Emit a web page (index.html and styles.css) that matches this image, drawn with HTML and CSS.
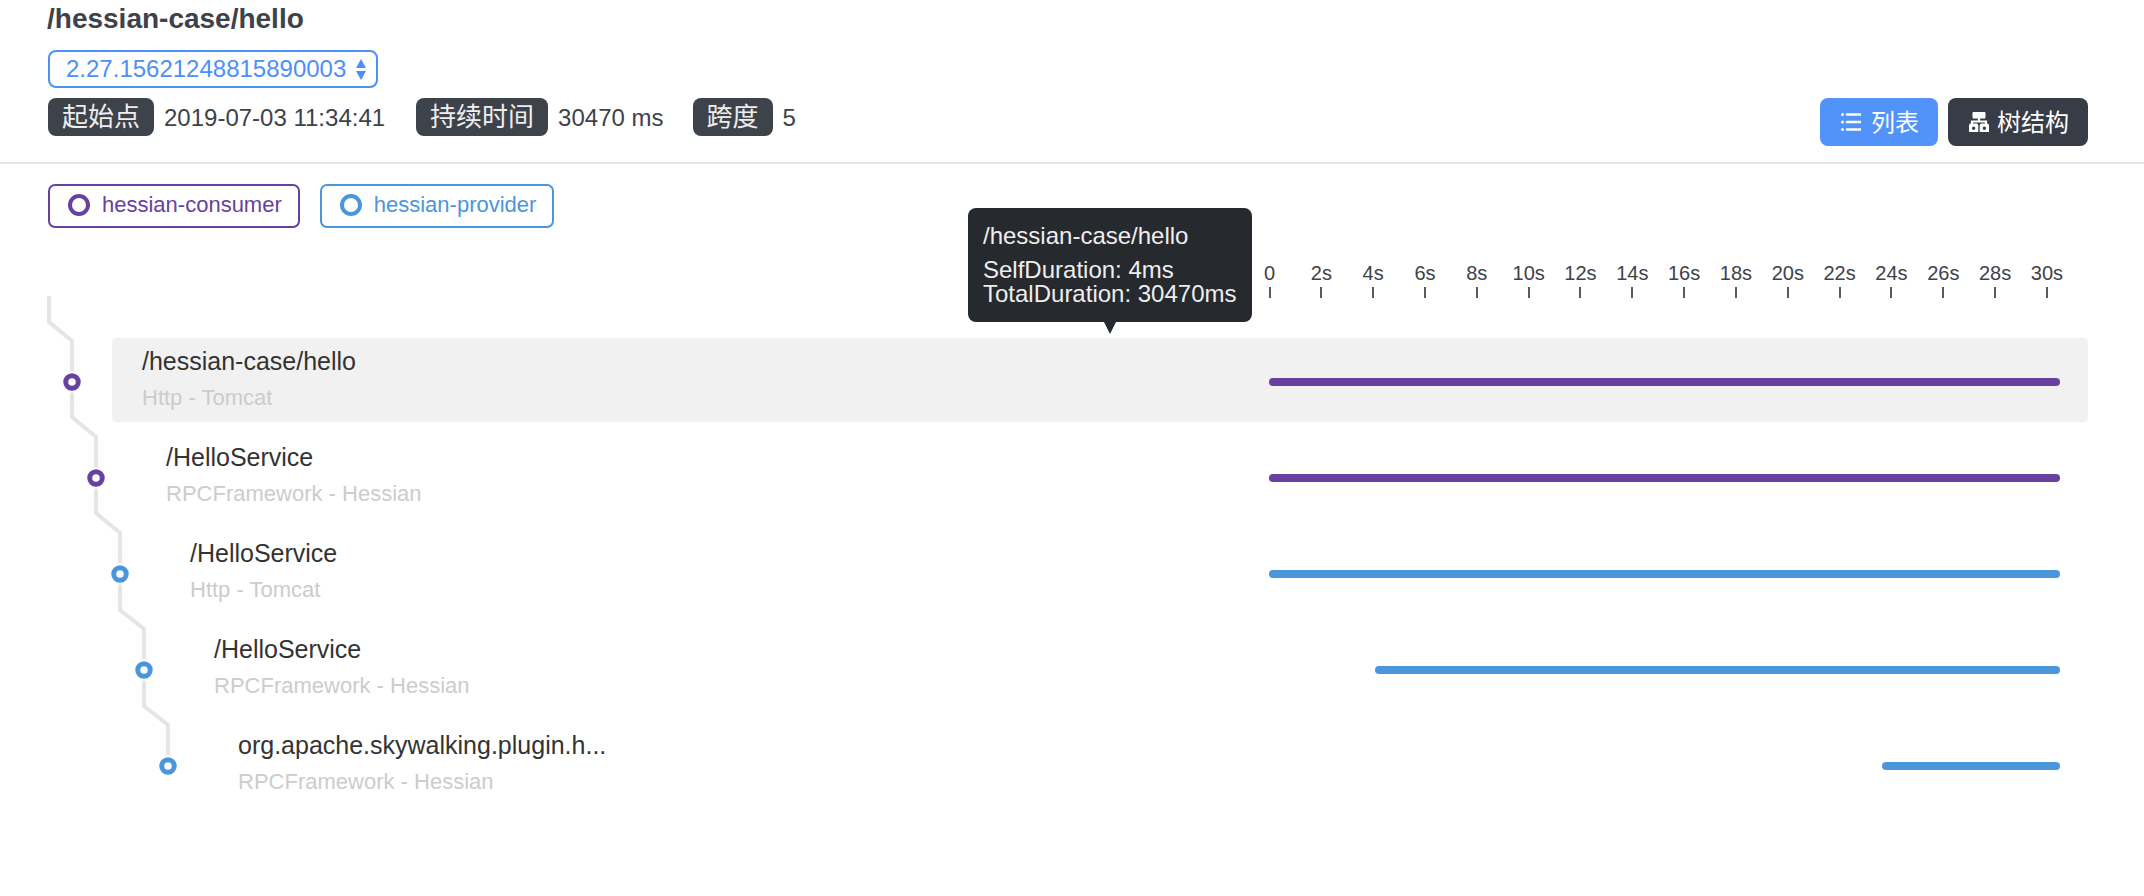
FILE: index.html
```html
<!DOCTYPE html>
<html lang="zh">
<head>
<meta charset="utf-8">
<title>Trace</title>
<link rel="stylesheet" href="styles.css">
</head>
<body>
<div class="page">
  <header class="header">
    <h1 class="title">/hessian-case/hello</h1>
    <div class="select">
      <span>2.27.15621248815890003</span>
      <svg class="select-arrows" viewBox="0 0 10 21" width="10" height="21"><path d="M5 0L10 9H0Z"/><path d="M0 12H10L5 21Z"/></svg>
    </div>
    <div class="toolbar">
      <div class="meta">
        <span class="tag">起始点</span><span class="value">2019-07-03 11:34:41</span>
        <span class="tag">持续时间</span><span class="value value-tight">30470 ms</span>
        <span class="tag">跨度</span><span class="value">5</span>
      </div>
      <div class="buttons">
        <button class="btn btn-list">
          <svg viewBox="0 0 20 20" width="20" height="20" class="btn-icon"><path d="M6 2.5H19.5M6 10H19.5M6 17.5H19.5" fill="none" stroke="#fff" stroke-width="2.6" stroke-linecap="round"/><circle cx="1.5" cy="2.5" r="1.5" fill="#fff"/><circle cx="1.5" cy="10" r="1.5" fill="#fff"/><circle cx="1.5" cy="17.5" r="1.5" fill="#fff"/></svg>
          <span>列表</span>
        </button>
        <button class="btn btn-tree">
          <svg viewBox="0 0 20 20" width="20" height="20" class="btn-icon"><rect x="3.5" y="0" width="13" height="6.5" rx="1" fill="#fff"/><path d="M3 12V9.5H17V12M10 6V9.5" fill="none" stroke="#fff" stroke-width="2.2"/><path fill-rule="evenodd" d="M2 11.5H7.5Q9.3 11.5 9.3 13.5V20H0V13.5Q0 11.5 2 11.5ZM4.65 14.6A1.7 1.7 0 1 0 4.65 18A1.7 1.7 0 1 0 4.65 14.6ZM12.7 11.5H18Q20 11.5 20 13.5V20H10.7V13.5Q10.7 11.5 12.7 11.5ZM15.35 14.6A1.7 1.7 0 1 0 15.35 18A1.7 1.7 0 1 0 15.35 14.6Z" fill="#fff"/></svg>
          <span>树结构</span>
        </button>
      </div>
    </div>
  </header>

  <div class="legends">
    <div class="legend legend-consumer"><i class="dot"></i><span>hessian-consumer</span></div>
    <div class="legend legend-provider"><i class="dot"></i><span>hessian-provider</span></div>
  </div>

  <section class="chart">
    <div class="axis">
      <div class="tick"><span>0</span><i></i></div>
      <div class="tick"><span>2s</span><i></i></div>
      <div class="tick"><span>4s</span><i></i></div>
      <div class="tick"><span>6s</span><i></i></div>
      <div class="tick"><span>8s</span><i></i></div>
      <div class="tick"><span>10s</span><i></i></div>
      <div class="tick"><span>12s</span><i></i></div>
      <div class="tick"><span>14s</span><i></i></div>
      <div class="tick"><span>16s</span><i></i></div>
      <div class="tick"><span>18s</span><i></i></div>
      <div class="tick"><span>20s</span><i></i></div>
      <div class="tick"><span>22s</span><i></i></div>
      <div class="tick"><span>24s</span><i></i></div>
      <div class="tick"><span>26s</span><i></i></div>
      <div class="tick"><span>28s</span><i></i></div>
      <div class="tick"><span>30s</span><i></i></div>
    </div>

    <div class="rows">
      <div class="row row-active">
        <div class="label d0"><div class="name">/hessian-case/hello</div><div class="sub">Http - Tomcat</div></div>
        <div class="track"><div class="bar bar-purple" style="margin-left:0;width:791px"></div></div>
      </div>
      <div class="row">
        <div class="label d1"><div class="name">/HelloService</div><div class="sub">RPCFramework - Hessian</div></div>
        <div class="track"><div class="bar bar-purple" style="margin-left:0;width:791px"></div></div>
      </div>
      <div class="row">
        <div class="label d2"><div class="name">/HelloService</div><div class="sub">Http - Tomcat</div></div>
        <div class="track"><div class="bar bar-blue" style="margin-left:0;width:791px"></div></div>
      </div>
      <div class="row">
        <div class="label d3"><div class="name">/HelloService</div><div class="sub">RPCFramework - Hessian</div></div>
        <div class="track"><div class="bar bar-blue" style="margin-left:106px;width:685px"></div></div>
      </div>
      <div class="row">
        <div class="label d4"><div class="name">org.apache.skywalking.plugin.h...</div><div class="sub">RPCFramework - Hessian</div></div>
        <div class="track"><div class="bar bar-blue" style="margin-left:613px;width:178px"></div></div>
      </div>
    </div>

    <svg class="tree" viewBox="0 228 200 600" width="200" height="600">
      <path class="tree-line" d="M49 296V322L72 341V417L96 437V513L120 533V610L144 629V706L168 725V766"/>
      <g class="halo"><circle cx="72" cy="382" r="10.7"/><circle cx="96" cy="478" r="10.7"/><circle cx="120" cy="574" r="10.7"/><circle cx="144" cy="670" r="10.7"/><circle cx="168" cy="766" r="10.7"/></g>
      <g class="node node-purple"><circle cx="72" cy="382" r="6.25"/><circle cx="96" cy="478" r="6.25"/></g>
      <g class="node node-blue"><circle cx="120" cy="574" r="6.25"/><circle cx="144" cy="670" r="6.25"/><circle cx="168" cy="766" r="6.25"/></g>
    </svg>
  </section>

  <div class="tooltip">
    <div class="tooltip-title">/hessian-case/hello</div>
    <div>SelfDuration: 4ms</div>
    <div>TotalDuration: 30470ms</div>
  </div>
</div>
</body>
</html>
```
FILE: styles.css
```css
* { box-sizing: border-box; }
html, body { margin: 0; padding: 0; background: #fff; }
body { font-family: "Liberation Sans", "Noto Sans CJK SC", sans-serif; color: #3d424b; overflow: hidden; }
.page { position: relative; width: 2144px; height: 896px; }

.header { padding: 0 56px 16px 48px; border-bottom: 2px solid #e6e6e6; height: 164px; }
.title { margin: 0 0 13px -1px; font-size: 28px; line-height: 37px; font-weight: 700; color: #3d424b; }
.select { display: inline-flex; align-items: center; justify-content: space-between; width: 330px; height: 38px; padding: 0 10px 0 16px; border: 2px solid #4d8ff8; border-radius: 8px; color: #4d8ff8; font-size: 24px; vertical-align: top; }
.select-arrows { fill: #4d8ff8; }
.toolbar { display: flex; justify-content: space-between; align-items: flex-start; margin-top: 10px; }
.meta { display: flex; align-items: center; height: 38px; }
.tag { display: block; height: 38px; line-height: 38px; padding: 0 14px; background: #3d424b; color: #eee; border-radius: 8px; font-size: 26px; margin-right: 10px; }
.value { font-size: 24px; color: #3d424b; margin-right: 31px; padding-top: 2px; }
.value-tight { margin-right: 29px; }
.buttons { display: flex; gap: 10px; }
.btn { display: flex; align-items: center; gap: 10px; height: 48px; padding: 0 19px 0 21px; border: 0; border-radius: 8px; color: #fff; font: inherit; font-size: 24px; }
.btn span { margin-bottom: 3px; }
.btn-list { background: #5293f9; }
.btn-tree { background: #383c47; gap: 8px; }
.btn-icon { flex: none; }

.legends { display: flex; gap: 20px; padding: 20px 0 0 48px; }
.legend { display: flex; align-items: center; gap: 12px; height: 44px; padding: 0 16px 2px 18px; border: 2px solid; border-radius: 7px; font-size: 22px; }
.dot { display: block; width: 22px; height: 22px; border: 4px solid; border-radius: 50%; }
.legend-consumer { color: #6741a0; }
.legend-provider { color: #4a96dd; }

.chart { position: relative; }
.axis { display: flex; height: 110px; padding: 33px 0 0 1243.6px; }
.tick { width: 51.83px; display: flex; flex-direction: column; align-items: center; color: #3d424b; font-size: 20px; line-height: 24px; }
.tick i { display: block; width: 2px; height: 11px; margin-top: 2px; background: #555b66; }

.rows { display: flex; flex-direction: column; gap: 12px; margin: 0 56px 0 112px; }
.row { display: flex; height: 84px; border-radius: 4px; }
.row-active { background: #f1f1f1; }
.label { width: 1157px; flex: none; padding-top: 5px; }
.d0 { padding-left: 30px; }
.d1 { padding-left: 54px; }
.d2 { padding-left: 78px; }
.d3 { padding-left: 102px; }
.d4 { padding-left: 126px; }
.name { font-size: 25px; line-height: 36px; color: #333; }
.sub { font-size: 22px; line-height: 36px; margin-top: 1px; color: #ccc; }
.track { flex: 1; display: flex; align-items: center; padding-top: 4px; }
.bar { height: 8px; border-radius: 4px; }
.bar-purple { background: #6741a0; }
.bar-blue { background: #4a96dd; }

.tree { position: absolute; left: 0; top: 0; }
.tree-line { fill: none; stroke: #e5e5e5; stroke-width: 4; }
.halo { fill: #fff; }
.node { fill: #fff; stroke-width: 5; }
.node-purple { stroke: #6741a0; }
.node-blue { stroke: #4a96dd; }

.tooltip { position: absolute; left: 968px; top: 208px; width: 284px; height: 114px; padding: 16px 15px 0; background: #26292e; border-radius: 8px; color: #eee; font-size: 24px; line-height: 24px; }
.tooltip::after { content: ""; position: absolute; left: 136px; top: 100%; border: 6px solid transparent; border-top: 12px solid #26292e; border-bottom: 0; }
.tooltip-title { margin-bottom: 10px; }
```
